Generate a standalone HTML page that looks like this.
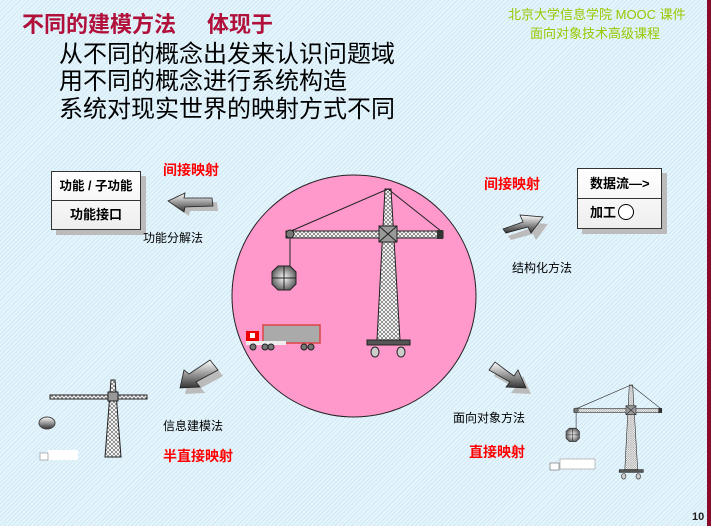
<!DOCTYPE html>
<html><head><meta charset="utf-8"><style>
body{margin:0;width:711px;height:526px;overflow:hidden;position:relative;
background:#e2f3fb repeating-linear-gradient(135deg,#e6f5fc 0 2px,#cfe8f5 2px 3px);
font-family:"Liberation Sans","Noto Sans CJK SC",sans-serif;}
.t{position:absolute;white-space:nowrap;line-height:1}
.r{color:#f00;font-weight:bold;font-size:14px}
.k{color:#000;font-size:12px}
.box{position:absolute;background:#fff;border:1px solid #333;box-shadow:5px 5px 0 #bbb;background:linear-gradient(#fff,#eee)}
.box div{height:28px;line-height:28px;font-weight:bold;font-size:13px;text-align:center}
</style></head><body>
<div style="position:absolute;left:707px;top:0;width:4px;height:526px;background:#8b0a2a"></div>
<div class="t" style="left:22px;top:14px;font-size:22px;font-weight:bold;color:#b0103a">不同的建模方法<span style="display:inline-block;width:31px"></span>体现于</div>
<div class="t" style="left:59px;top:43px;font-size:24px">从不同的概念出发来认识问题域</div>
<div class="t" style="left:59px;top:70px;font-size:24px">用不同的概念进行系统构造</div>
<div class="t" style="left:59px;top:98px;font-size:24px">系统对现实世界的映射方式不同</div>
<div class="t" style="left:508px;top:8px;font-size:13px;color:#9ac800">北京大学信息学院 MOOC 课件</div>
<div class="t" style="left:530px;top:27px;font-size:13px;color:#9ac800">面向对象技术高级课程</div>

<div class="box" style="left:51px;top:171px;width:88px;height:57px">
<div style="border-bottom:1px solid #333;font-size:12.5px">功能 / 子功能</div><div>功能接口</div></div>
<div class="box" style="left:577px;top:168px;width:83px;height:59px">
<div style="border-bottom:1px solid #333;text-align:left;padding-left:12px;height:29px;line-height:29px">数据流—&gt;</div><div style="text-align:left;padding-left:12px">加工<span style="display:inline-block;width:14px;height:14px;border:1px solid #000;border-radius:50%;vertical-align:-3px;margin-left:2px;background:#fff"></span></div></div>

<div class="t r" style="left:163px;top:163px">间接映射</div>
<div class="t k" style="left:143px;top:232px">功能分解法</div>
<div class="t r" style="left:484px;top:177px">间接映射</div>
<div class="t k" style="left:512px;top:262px">结构化方法</div>
<div class="t k" style="left:163px;top:420px">信息建模法</div>
<div class="t r" style="left:163px;top:449px">半直接映射</div>
<div class="t k" style="left:453px;top:412px">面向对象方法</div>
<div class="t r" style="left:469px;top:445px">直接映射</div>
<div class="t" style="left:692px;top:512px;font-size:11px;font-weight:bold;color:#222">10</div>

<svg width="711" height="526" style="position:absolute;left:0;top:0">
<defs>
<pattern id="h" width="4" height="4" patternUnits="userSpaceOnUse"><rect width="4" height="4" fill="#fff"/><path d="M0 0L4 4M4 0L0 4" stroke="#555" stroke-width=".6"/></pattern>
<linearGradient id="g" x1="0" y1="0" x2="0" y2="1"><stop offset="0" stop-color="#fff"/><stop offset=".5" stop-color="#999"/><stop offset="1" stop-color="#333"/></linearGradient>
<radialGradient id="b"><stop offset="0" stop-color="#fff"/><stop offset="1" stop-color="#666"/></radialGradient>
<g id="crane">
<polygon points="385,189 391,189 400,340 377,340" fill="url(#h)" stroke="#222"/>
<rect x="286" y="231" width="157" height="7" fill="url(#h)" stroke="#222"/>
<rect x="379" y="226" width="18" height="16" fill="#999" stroke="#222"/>
<path d="M379 226L397 242M397 226L379 242" stroke="#222"/>
<path d="M388 189L291 231M388 189L441 231M290 234V266" stroke="#222" fill="none"/>
<circle cx="290" cy="234" r="4" fill="#777" stroke="#222"/>
<rect x="437" y="230" width="6" height="9" fill="#333"/>
<rect x="367" y="340" width="43" height="5" fill="#555" stroke="#222"/>
<ellipse cx="375" cy="352" rx="4" ry="5" fill="#ccc" stroke="#222"/>
<ellipse cx="401" cy="352" rx="4" ry="5" fill="#ccc" stroke="#222"/>
</g>
<g id="ball"><polygon points="278,266 290,266 296,272 296,284 290,290 278,290 272,284 272,272" fill="url(#b)" stroke="#222"/><path d="M284 266V290M272 278H296" stroke="#222"/></g>
</defs>
<ellipse cx="354" cy="296" rx="122" ry="121" fill="#ff99cc" stroke="#222"/>
<use href="#crane"/><use href="#ball"/>
<g>
<rect x="263" y="325" width="57" height="18" fill="#aaa" stroke="#d44" stroke-width="1.5"/>
<rect x="246" y="331" width="13" height="10" fill="#e00"/><rect x="250" y="333" width="5" height="5" fill="#fff"/>
<rect x="246" y="341" width="40" height="4" fill="#eee"/>
<circle cx="253" cy="347" r="3" fill="#777" stroke="#222"/><circle cx="265" cy="347" r="3" fill="#777" stroke="#222"/><circle cx="271" cy="347" r="3" fill="#777" stroke="#222"/><circle cx="304" cy="347" r="3" fill="#777" stroke="#222"/><circle cx="311" cy="347" r="3" fill="#777" stroke="#222"/>
</g>
<g transform="translate(413.7,279.2) scale(.56)"><use href="#crane"/><use href="#ball"/></g>
<rect x="560" y="459" width="35" height="10" fill="#fff" stroke="#999" stroke-width=".6"/><rect x="550" y="463" width="9" height="7" fill="#fff" stroke="#666" stroke-width=".6"/>
<polygon points="111,380 115,380 121,457 105,457" fill="url(#h)" stroke="#222"/>
<rect x="50" y="395" width="97" height="4" fill="url(#h)" stroke="#222"/>
<rect x="108" y="392" width="10" height="9" fill="#999" stroke="#222"/>
<ellipse cx="47" cy="423" rx="8" ry="6" fill="url(#g)" stroke="#444"/>
<rect x="48" y="450" width="30" height="10" fill="#fff"/><rect x="40" y="453" width="8" height="7" fill="#fff" stroke="#888" stroke-width=".6"/>
<g stroke="#222" fill="url(#g)" stroke-width=".8">
<polygon points="170,202 186,194 185,199 213,198 214,207 186,207 185,212" transform="translate(4,4)" fill="#bbb" stroke="none"/>
<polygon points="168,201 185,193 184,198 212,198 213,206 185,207 184,212"/>
<polygon points="505,232 525,225 522,218 545,220 533,236 530,230 508,236" transform="translate(3,4)" fill="#bbb" stroke="none"/>
<polygon points="503,229 523,222 520,215 543,217 531,233 528,227 506,233"/>
<polygon points="182,390 186,372 191,376 212,362 220,372 198,384 202,389" transform="translate(3,4)" fill="#bbb" stroke="none"/>
<polygon points="180,388 184,370 189,374 210,360 218,370 196,382 200,387"/>
<polygon points="491,372 497,364 516,378 520,372 528,390 508,389 512,384" transform="translate(3,4)" fill="#bbb" stroke="none"/>
<polygon points="489,370 495,362 514,376 518,370 526,388 506,387 510,382"/>
</g>
</svg>
</body></html>
